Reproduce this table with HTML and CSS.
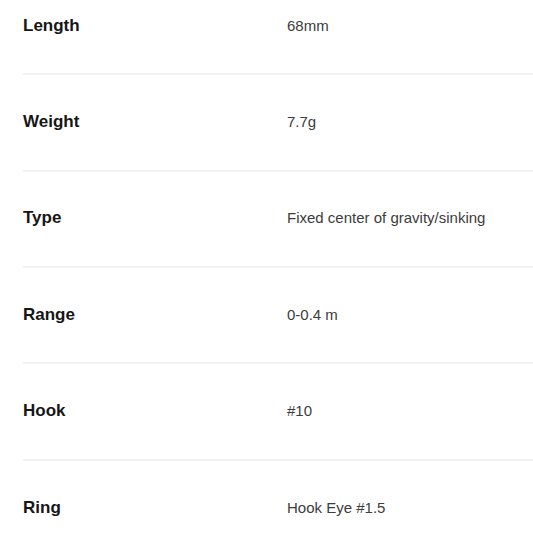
FILE: index.html
```html
<!DOCTYPE html>
<html lang="en">
<head>
<meta charset="utf-8">
<title>Spec</title>
<link rel="stylesheet" href="styles.css">
</head>
<body>
<dl class="spec">
  <div class="row"><dt class="label">Length</dt><dd class="value">68mm</dd></div>
  <div class="row"><dt class="label">Weight</dt><dd class="value">7.7g</dd></div>
  <div class="row"><dt class="label">Type</dt><dd class="value">Fixed center of gravity/sinking</dd></div>
  <div class="row"><dt class="label">Range</dt><dd class="value">0-0.4 m</dd></div>
  <div class="row"><dt class="label">Hook</dt><dd class="value">#10</dd></div>
  <div class="row"><dt class="label">Ring</dt><dd class="value">Hook Eye #1.5</dd></div>
</dl>
</body>
</html>
```
FILE: styles.css
```css
html, body {
  margin: 0;
  padding: 0;
  background: #ffffff;
}
.spec {
  margin: 0 0 0 23px;
  padding: 0;
  font-family: "Liberation Sans", Arial, sans-serif;
}
.row {
  display: grid;
  grid-template-columns: 264px 1fr;
  align-items: center;
  padding: 34.8px 0 35.6px;
  border-bottom: 2px solid #f2f2f2;
}
.row:first-child {
  padding-top: 13.6px;
}
.row:last-child {
  border-bottom: none;
}
.label {
  margin: 0;
  font-size: 17px;
  font-weight: bold;
  line-height: 24px;
  color: #161616;
}
.value {
  margin: 0;
  font-size: 15px;
  line-height: 24px;
  color: #3c3c3c;
}
```
